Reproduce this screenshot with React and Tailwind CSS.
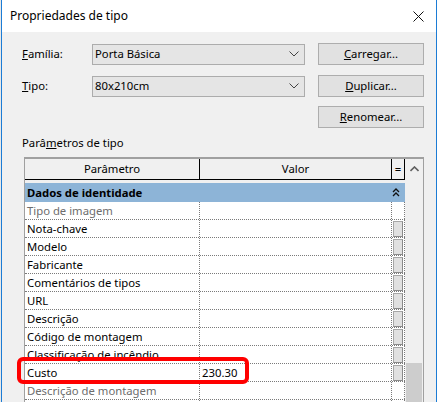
const rows = [
  { name: 'Tipo de imagem', value: '', disabled: true },
  { name: 'Nota-chave', value: '' },
  { name: 'Modelo', value: '' },
  { name: 'Fabricante', value: '' },
  { name: 'Comentários de tipos', value: '' },
  { name: 'URL', value: '' },
  { name: 'Descrição', value: '' },
  { name: 'Código de montagem', value: '' },
  { name: 'Classificação de incêndio', value: '' },
  { name: 'Custo', value: '230.30' },
  { name: 'Descrição de montagem', value: '', disabled: true },
  { name: '', value: '', disabled: true },
];

function ChevronDown() {
  return (
    <svg width="10" height="6" viewBox="0 0 10 6" className="mr-[5px]">
      <path d="M0.5 0.5 L5 5 L9.5 0.5" fill="none" stroke="#444" strokeWidth="1" />
    </svg>
  );
}

function Combo({ text }) {
  return (
    <div className="w-[213px] h-[21px] flex items-center justify-between bg-[#e5e5e5] border border-[#acacac] pl-[2px]">
      <span>{text}</span>
      <ChevronDown />
    </div>
  );
}

function Btn({ first, rest }) {
  return (
    <button className="w-[106px] h-[22px] flex items-center justify-center bg-[#e1e1e1] border border-[#adadad]">
      <span><u>{first}</u>{rest}</span>
    </button>
  );
}

export default function App() {
  return (
    <div className="relative w-[439px] h-[402px] bg-white overflow-hidden flex font-['Noto_Sans',sans-serif] text-[11.3px] leading-none text-black">
      <div className="w-[1px] shrink-0 bg-[#e8e8e8]" />
      <div className="w-[436px] shrink-0 h-full border-x border-[#1c7cd5] flex flex-col overflow-hidden">
        {/* Title bar */}
        <div className="h-[32px] shrink-0 flex items-center justify-between bg-white pl-[8px] pr-[12px]">
          <span className="text-[12px]">Propriedades de tipo</span>
          <svg width="11" height="11" viewBox="0 0 11 11">
            <path d="M0.5 0.5 L10.5 10.5 M10.5 0.5 L0.5 10.5" stroke="#111" strokeWidth="1" />
          </svg>
        </div>

        {/* Body */}
        <div className="flex-1 min-h-0 flex flex-col bg-[#f0f0f0] pl-[20px] pt-[11px]">
          <div className="shrink-0 flex items-center h-[22px]">
            <span className="w-[70px]"><u>F</u>amília:</span>
            <Combo text="Porta Básica" />
            <div className="ml-[13px]"><Btn first="C" rest="arregar..." /></div>
          </div>
          <div className="shrink-0 flex items-center h-[22px] mt-[10px]">
            <span className="w-[70px]"><u>T</u>ipo:</span>
            <Combo text="80x210cm" />
            <div className="ml-[13px]"><Btn first="D" rest="uplicar..." /></div>
          </div>
          <div className="shrink-0 flex h-[22px] mt-[9px] pl-[296px]">
            <Btn first="R" rest="enomear..." />
          </div>
          <div className="shrink-0 h-[16px] mt-[7px] flex items-center">
            <span>Parâ<u>m</u>etros de tipo</span>
          </div>

          {/* Table */}
          <div className="mt-[6px] ml-[2px] w-[400px] flex-1 min-h-0 flex border-l border-t-2 border-r border-[#a0a0a0]">
            <div className="w-[380px] flex flex-col bg-white overflow-hidden">
              <div className="shrink-0 bg-[#f0f0f0] pb-[3px]">
                <div className="h-[21px] flex border-b border-black">
                  <div className="w-[175px] flex items-center justify-center border-r border-black">Parâmetro</div>
                  <div className="w-[192px] flex items-center justify-center border-r border-black">Valor</div>
                  <div className="w-[13px] flex items-center justify-center border-r border-black">=</div>
                </div>
              </div>
              <div className="shrink-0 h-[19px] flex items-center justify-between bg-[#8db4d7] pl-[2px]">
                <span className="font-bold">Dados de identidade</span>
                <svg width="8" height="9" viewBox="0 0 8 9" className="mr-[5px]">
                  <path d="M1 4 L4 1 L7 4 M1 8 L4 5 L7 8" fill="none" stroke="#111" strokeWidth="1.3" />
                </svg>
              </div>
              {rows.map((r, i) => (
                <div key={i} className="shrink-0 h-[18px] flex border-b border-dotted border-[#7a7a7a]">
                  <div className={`w-[175px] flex items-center pl-[2px] border-r border-dotted border-[#7a7a7a] whitespace-nowrap overflow-hidden ${r.disabled ? 'text-[#6d6d6d]' : ''}`}>{r.name}</div>
                  <div className="w-[192px] flex items-center pl-[2px] border-r border-dotted border-[#7a7a7a]">{r.value}</div>
                  <div className="w-[13px] flex items-center justify-center border-r border-dotted border-[#7a7a7a]">
                    {!r.disabled && <div className="w-[10px] h-[16px] bg-[#e0e0e0] border border-[#a6a6a6] border-r-[#8a8a8a] border-b-[#8a8a8a]" />}
                  </div>
                </div>
              ))}
            </div>
            {/* Scrollbar */}
            <div className="w-[18px] flex flex-col items-center bg-[#f0f0f0]">
              <div className="h-[17px] shrink-0 flex items-center justify-center pt-[2px]">
                <svg width="9" height="6" viewBox="0 0 9 6">
                  <path d="M0.5 5 L4.5 1 L8.5 5" fill="none" stroke="#606060" strokeWidth="1.6" />
                </svg>
              </div>
              <div className="h-[187px] shrink-0" />
              <div className="w-[16px] flex-1 bg-[#cdcdcd]" />
            </div>
          </div>
        </div>
      </div>

      {/* Highlight */}
      <div className="absolute left-[17px] top-[357px] w-[232px] h-[27px] border-4 border-[#ff0000] rounded-[6px]" />
    </div>
  );
}
